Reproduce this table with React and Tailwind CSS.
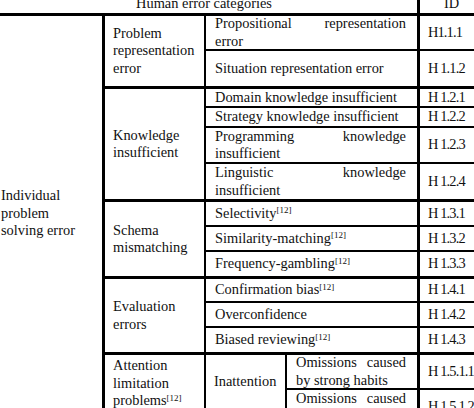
const Sup = ({ children }) => (
  <sup className="text-[9px] leading-none">{children}</sup>
);

// one description row + its ID cell
function Row({ h, first, desc, id, w = "w-[211px]" }) {
  return (
    <div
      className={`flex ${h} ${first ? "" : "border-t-2 border-black"}`}
    >
      <div className={`${w} shrink-0 flex items-center pl-[9px] pr-[11px]`}>
        <div className="w-full text-justify">{desc}</div>
      </div>
      <div className="w-[69px] shrink-0 border-l-[3px] border-black flex items-center pl-[8px] tracking-[-0.06em] whitespace-nowrap">
        {id}
      </div>
    </div>
  );
}

function Group({ label, rows, first }) {
  return (
    <div className={`flex ${first ? "" : "border-t-[3px] border-black"}`}>
      <div className="w-[101px] shrink-0 border-r-2 border-black flex items-center pl-[8px] pr-[2px]">
        <div>{label}</div>
      </div>
      <div className="flex flex-col">
        {rows.map((r, i) => (
          <Row key={r.id} first={i === 0} {...r} />
        ))}
      </div>
    </div>
  );
}

export default function App() {
  return (
    <div
      className="w-[474px] h-[408px] overflow-hidden bg-white text-[#111] text-[14.4px] leading-[17.5px]"
      style={{ fontFamily: '"Liberation Serif", "Times New Roman", serif' }}
    >
      <div className="w-[560px]">
        {/* header */}
        <div className="flex h-[13px]">
          <div className="w-[417px] shrink-0 text-center pr-[9px] -mt-[5px]">
            Human error categories
          </div>
          <div className="w-[69px] shrink-0 border-l-[3px] border-black text-center -mt-[5px] pr-[3px]">
            ID
          </div>
        </div>

        {/* body */}
        <div className="flex border-t-[3px] border-black">
          <div className="w-[102px] shrink-0 pt-[171px] pl-[1px]">
            Individual
            <br />
            problem
            <br />
            solving error
          </div>

          <div className="flex flex-col border-l-[3px] border-black">
            <Group
              first
              label="Problem representation error"
              rows={[
                { h: "h-[33px]", desc: "Propositional representation error", id: "H1.1.1" },
                { h: "h-[37px]", desc: "Situation representation error", id: "H 1.1.2" },
              ]}
            />
            <Group
              label="Knowledge insufficient"
              rows={[
                { h: "h-[17px]", desc: "Domain knowledge insufficient", id: "H 1.2.1" },
                { h: "h-[20px]", desc: "Strategy knowledge insufficient", id: "H 1.2.2" },
                { h: "h-[36px]", desc: "Programming knowledge insufficient", id: "H 1.2.3" },
                { h: "h-[37px]", desc: "Linguistic knowledge insufficient", id: "H 1.2.4" },
              ]}
            />
            <Group
              label="Schema mismatching"
              rows={[
                { h: "h-[23px]", desc: <>Selectivity<Sup>[12]</Sup></>, id: "H 1.3.1" },
                { h: "h-[25px]", desc: <>Similarity-matching<Sup>[12]</Sup></>, id: "H 1.3.2" },
                { h: "h-[26px]", desc: <>Frequency-gambling<Sup>[12]</Sup></>, id: "H 1.3.3" },
              ]}
            />
            <Group
              label="Evaluation errors"
              rows={[
                { h: "h-[22px]", desc: <>Confirmation bias<Sup>[12]</Sup></>, id: "H 1.4.1" },
                { h: "h-[25px]", desc: "Overconfidence", id: "H 1.4.2" },
                { h: "h-[26px]", desc: <>Biased reviewing<Sup>[12]</Sup></>, id: "H 1.4.3" },
              ]}
            />

            {/* attention group */}
            <div className="flex border-t-[3px] border-black">
              <div className="w-[101px] shrink-0 border-r-2 border-black pl-[8px] pt-[2px]">
                Attention
                <br />
                limitation
                <br />
                problems<Sup>[12]</Sup>
              </div>
              <div className="w-[81px] shrink-0 border-r-2 border-black pl-[8px] pt-[18px]">
                Inattention
              </div>
              <div className="flex flex-col">
                <Row
                  first
                  w="w-[130px]"
                  h="h-[33px]"
                  desc="Omissions caused by strong habits"
                  id="H 1.5.1.1"
                />
                <Row
                  w="w-[130px]"
                  h="h-[36px]"
                  desc="Omissions caused by interruptions"
                  id="H 1.5.1.2"
                />
              </div>
            </div>
          </div>
        </div>
      </div>
    </div>
  );
}
